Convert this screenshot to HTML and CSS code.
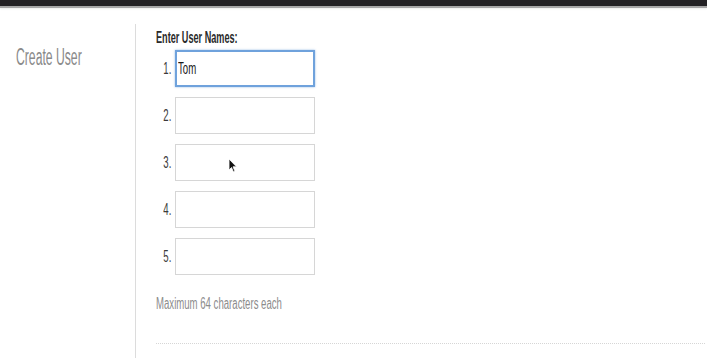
FILE: index.html
```html
<!DOCTYPE html>
<html>
<head>
<meta charset="utf-8">
<link rel="stylesheet" href="styles.css">
</head>
<body>
<div class="topbar"></div>
<div class="main">
  <div class="side">
    <span class="sq side-title">Create User</span>
  </div>
  <div class="content">
    <div class="heading"><span class="sq">Enter User Names:</span></div>
    <div class="rows">
      <div class="row"><span class="num"><span class="sq-r">1.</span></span><div class="box focus"><span class="sq val">Tom</span></div></div>
      <div class="row"><span class="num"><span class="sq-r">2.</span></span><div class="box"></div></div>
      <div class="row"><span class="num"><span class="sq-r">3.</span></span><div class="box"></div></div>
      <div class="row"><span class="num"><span class="sq-r">4.</span></span><div class="box"></div></div>
      <div class="row"><span class="num"><span class="sq-r">5.</span></span><div class="box"></div></div>
    </div>
    <div class="hint"><span class="sq">Maximum 64 characters each</span></div>
    <div class="dots"></div>
  </div>
</div>
<svg class="cursor" width="9" height="15" viewBox="0 0 9 15"><path d="M1 1 L1 12 L3.5 9.5 L5.5 14 L7 13.3 L5 8.8 L8.5 8.8 Z" fill="#111" stroke="#fff" stroke-width="0.8"/></svg>
</body>
</html>
```

FILE: styles.css
```css
html, body {
  margin: 0;
  padding: 0;
  background: #fff;
  font-family: "Liberation Sans", Arial, sans-serif;
  overflow: hidden;
}
.topbar {
  height: 6px;
  background: #232124;
  border-bottom: 2px solid #a6a6a6;
  box-shadow: 0 1px 2px rgba(0,0,0,0.08);
}
.main {
  display: flex;
  margin-top: 16px;
}
.side {
  width: 135px;
  padding-left: 16px;
  box-sizing: border-box;
  padding-top: 21px;
}
.sq {
  display: inline-block;
  transform: scaleX(0.6);
  transform-origin: left center;
  white-space: nowrap;
}
.sq-r {
  display: inline-block;
  transform: scaleX(0.6);
  transform-origin: right center;
  white-space: nowrap;
}
.side-title {
  font-size: 23px;
  color: #8a8a8a;
  line-height: 24px;
  transform: scaleX(0.53);
}
.content {
  flex: 1;
  border-left: 1px solid #dcdcdc;
  padding-left: 20px;
  padding-top: 5px;
  min-height: 340px;
}
.heading {
  font-size: 16px;
  font-weight: bold;
  color: #2a2a2a;
  line-height: 18px;
  height: 18px;
}
.heading .sq {
  transform: scaleX(0.57);
}
.rows {
  display: flex;
  flex-direction: column;
  gap: 10px;
  margin-top: 3px;
}
.row {
  display: flex;
  align-items: center;
}
.num {
  width: 15px;
  text-align: right;
  margin-right: 4px;
  font-size: 16px;
  color: #3a3a3a;
}
.box {
  width: 140px;
  height: 37px;
  box-sizing: border-box;
  border: 1px solid #d6d6d6;
  background: #fff;
  display: flex;
  align-items: center;
  padding-left: 2px;
}
.box.focus {
  border: 2px solid #6fa2dc;
  box-shadow: 0 0 2px rgba(80,140,210,0.6);
  padding-left: 1px;
}
.val {
  font-size: 16px;
  color: #1a1a1a;
}
.hint {
  margin-top: 20px;
  font-size: 16px;
  color: #8c8c8c;
  line-height: 18px;
}
.dots {
  margin-top: 30px;
  margin-right: 2px;
  border-top: 1px dotted #d6d6d6;
}
.cursor {
  position: absolute;
  left: 228px;
  top: 158px;
}
```
